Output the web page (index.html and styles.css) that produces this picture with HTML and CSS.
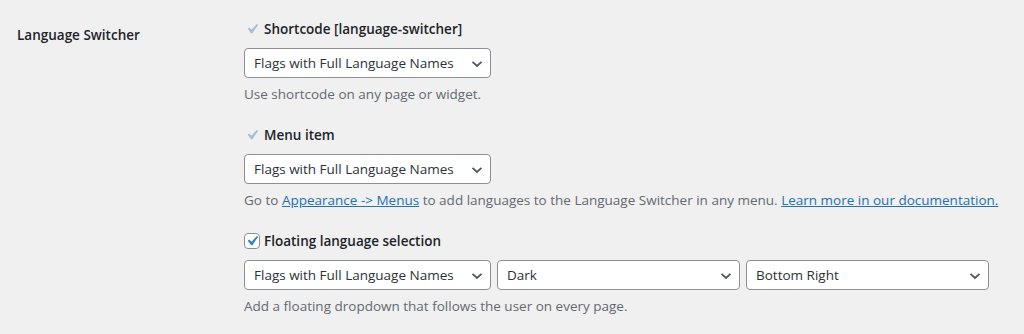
FILE: index.html
```html
<!DOCTYPE html>
<html lang="en">
<head>
<meta charset="UTF-8" />
<meta name="viewport" content="width=device-width, initial-scale=1" />
<title>Language Switcher Settings</title>
<link rel="stylesheet" href="styles.css">
</head>
<body>
  <div class="settings-row">
    <div class="row-label">Language Switcher</div>
    <div class="row-fields">

      <div class="option">
        <label class="check-line">
          <span class="check check-disabled">
            <svg viewBox="0 0 20 20" width="20" height="20"><path d="M14.83 4.89l1.34.94-5.81 8.38H9.02L5.78 9.67l1.34-1.25 2.57 2.4z"/></svg>
          </span>
          Shortcode [language-switcher]
        </label>
        <div class="select-group">
          <span class="select-wrap wide">
            <select><option>Flags with Full Language Names</option></select>
            <svg class="chevron" viewBox="0 0 12 8" width="12" height="8"><path d="M1.5 1.8l4.5 4.2 4.5-4.2"/></svg>
          </span>
        </div>
        <p class="description">Use shortcode on any page or widget.</p>
      </div>

      <div class="option">
        <label class="check-line">
          <span class="check check-disabled">
            <svg viewBox="0 0 20 20" width="20" height="20"><path d="M14.83 4.89l1.34.94-5.81 8.38H9.02L5.78 9.67l1.34-1.25 2.57 2.4z"/></svg>
          </span>
          Menu item
        </label>
        <div class="select-group">
          <span class="select-wrap wide">
            <select><option>Flags with Full Language Names</option></select>
            <svg class="chevron" viewBox="0 0 12 8" width="12" height="8"><path d="M1.5 1.8l4.5 4.2 4.5-4.2"/></svg>
          </span>
        </div>
        <p class="description">Go to <a href="#">Appearance -&gt; Menus</a> to add languages to the Language Switcher in any menu. <a href="#">Learn more in our documentation.</a></p>
      </div>

      <div class="option">
        <label class="check-line">
          <span class="check check-on">
            <svg viewBox="0 0 20 20" width="20" height="20"><path d="M14.83 4.89l1.34.94-5.81 8.38H9.02L5.78 9.67l1.34-1.25 2.57 2.4z"/></svg>
          </span>
          Floating language selection
        </label>
        <div class="select-group">
          <span class="select-wrap wide">
            <select><option>Flags with Full Language Names</option></select>
            <svg class="chevron" viewBox="0 0 12 8" width="12" height="8"><path d="M1.5 1.8l4.5 4.2 4.5-4.2"/></svg>
          </span>
          <span class="select-wrap">
            <select><option>Dark</option></select>
            <svg class="chevron" viewBox="0 0 12 8" width="12" height="8"><path d="M1.5 1.8l4.5 4.2 4.5-4.2"/></svg>
          </span>
          <span class="select-wrap">
            <select><option>Bottom Right</option></select>
            <svg class="chevron" viewBox="0 0 12 8" width="12" height="8"><path d="M1.5 1.8l4.5 4.2 4.5-4.2"/></svg>
          </span>
        </div>
        <p class="description">Add a floating dropdown that follows the user on every page.</p>
      </div>

    </div>
  </div>
</body>
</html>
```

FILE: styles.css
```css
/* Base */
*, *::before, *::after {
  box-sizing: border-box;
}
body {
  margin: 0;
  background: #f0f0f1;
  color: #1d2327;
  font-family: "Open Sans", "Noto Sans", sans-serif;
  font-size: 13.5px;
  line-height: 20px;
}

/* Settings row */
.settings-row {
  display: grid;
  grid-template-columns: 227px 1fr;
  padding-left: 17px;
}
.row-label {
  padding-top: 25px;
  font-weight: 600;
}
.row-fields {
  padding-top: 19px;
}
.option + .option {
  margin-top: 21px;
}

/* Checkbox line */
.check-line {
  display: flex;
  align-items: center;
  gap: 4px;
  font-weight: 600;
}
.check {
  width: 16px;
  height: 16px;
  display: flex;
  align-items: center;
  justify-content: center;
  border-radius: 4px;
  flex-shrink: 0;
}
.check svg {
  width: 20px;
  height: 20px;
  flex-shrink: 0;
}
.check-disabled svg {
  fill: #a2bdd6;
}
.check-on {
  background: #fff;
  border: 1px solid #8c8f94;
}
.check-on svg {
  fill: #3582c4;
}

/* Selects */
.select-group {
  display: flex;
  gap: 6px;
  margin-top: 9px;
}
.select-wrap {
  position: relative;
  display: block;
  width: 243px;
}
.select-wrap.wide {
  width: 247px;
}
select {
  appearance: none;
  -webkit-appearance: none;
  width: 100%;
  height: 30px;
  padding: 0 24px 0 9px;
  border: 1px solid #8c8f94;
  border-radius: 4px;
  background: #fff;
  color: #2c3338;
  font-family: inherit;
  font-size: 13.5px;
  line-height: 28px;
}
.chevron {
  position: absolute;
  right: 8px;
  top: 12px;
  fill: none;
  stroke: #50575e;
  stroke-width: 1.8;
  pointer-events: none;
}

/* Descriptions */
.description {
  margin: 6px 0 0;
  color: #646970;
}
.description a {
  color: #2271b1;
  text-decoration: underline;
}
```
